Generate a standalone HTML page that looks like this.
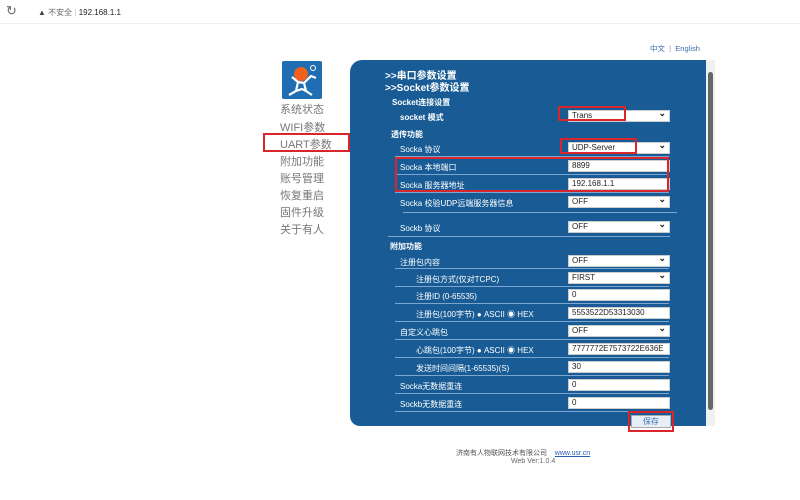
<!DOCTYPE html>
<html><head><meta charset="utf-8"><style>
*{margin:0;padding:0;box-sizing:border-box}
body{width:800px;height:500px;background:#fff;position:relative;overflow:hidden;font-family:"Liberation Sans","Noto Sans CJK SC",sans-serif}
.a{position:absolute;white-space:nowrap}
.w{color:#fff;font-size:8px}
.b{font-weight:bold}
.sel,.inp{position:absolute;left:568px;width:102px;height:12px;background:#fff;border:1px solid #ccc;font-size:8px;color:#222;padding-left:3px;line-height:10px}
.sel:after{content:"⌄";position:absolute;right:3px;top:-3px;font-size:9px;font-weight:bold}
.ln{position:absolute;left:395px;width:274px;height:1px;background:#7aa6cf}
.red{position:absolute;border:2px solid #d9262c}
.nav{position:absolute;left:280px;font-size:11px;color:#777}
</style></head><body>
<div class="a" style="left:0;top:0;width:800px;height:24px;background:#fff;border-bottom:1px solid #eee"></div>
<div class="a" style="left:6px;top:3px;font-size:13px;color:#666">↻</div>
<div class="a" style="left:38px;top:7px;font-size:8px;color:#444">▲ <span style="color:#666">不安全</span> <span style="color:#ccc">|</span> <span style="color:#222">192.168.1.1</span></div>
<div class="a" style="left:650px;top:43px;font-size:7.5px;color:#3a6fb0">中文 <span style="color:#999">&nbsp;|&nbsp;</span> English</div>
<svg class="a" style="left:282px;top:61px" width="40" height="38" viewBox="0 0 40 38"><rect width="40" height="38" rx="2" fill="#1f6db3"/><circle cx="19" cy="13" r="7" fill="#f0611e"/><circle cx="31" cy="7" r="2.5" fill="none" stroke="#fff" stroke-width="1"/><path d="M10 16 L16 21 L14 30 L7 34 M16 21 L22 22 L29 15 L34 17 M22 22 L24 30 L30 34 M14 30 L20 28 L24 30" fill="none" stroke="#fff" stroke-width="2.2" stroke-linejoin="round"/></svg>
<div class="nav" style="top:101px">系统状态</div>
<div class="nav" style="top:119px">WIFI参数</div>
<div class="nav" style="top:136px">UART参数</div>
<div class="nav" style="top:153px">附加功能</div>
<div class="nav" style="top:170px">账号管理</div>
<div class="nav" style="top:187px">恢复重启</div>
<div class="nav" style="top:204px">固件升级</div>
<div class="nav" style="top:221px">关于有人</div>
<div class="red" style="left:263px;top:133px;width:87px;height:19px"></div>
<div class="a" style="left:350px;top:60px;width:358px;height:366px;background:#195c95;border-radius:12px 0 0 10px"></div>
<div class="a" style="left:706px;top:60px;width:9px;height:366px;background:#f0f0f0"></div>
<div class="a" style="left:708px;top:72px;width:5px;height:338px;background:#666;border-radius:3px"></div>
<div class="a w b" style="left:385px;top:67px;font-size:10px">&gt;&gt;串口参数设置</div>
<div class="a w b" style="left:385px;top:79px;font-size:10px">&gt;&gt;Socket参数设置</div>
<div class="a w b" style="left:392px;top:97px">Socket连接设置</div>
<div class="a w b" style="left:400px;top:112px">socket 模式</div>
<div class="sel" style="top:110px">Trans</div>
<div class="a w b" style="left:391px;top:129px">透传功能</div>
<div class="a w" style="left:400px;top:144px">Socka 协议</div><div class="sel" style="top:142px">UDP-Server</div>
<div class="ln" style="top:156px"></div>
<div class="a w" style="left:400px;top:162px">Socka 本地端口</div><div class="inp" style="top:160px">8899</div>
<div class="ln" style="top:174px"></div>
<div class="a w" style="left:400px;top:180px">Socka 服务器地址</div><div class="inp" style="top:178px">192.168.1.1</div>
<div class="ln" style="top:192px"></div>
<div class="a w" style="left:400px;top:198px">Socka 校验UDP远端服务器信息</div><div class="sel" style="top:196px">OFF</div>
<div class="ln" style="top:212px;left:403px"></div>
<div class="a w" style="left:400px;top:223px">Sockb 协议</div><div class="sel" style="top:221px">OFF</div>
<div class="ln" style="top:236px;left:388px;width:282px"></div>
<div class="a w b" style="left:390px;top:241px">附加功能</div>
<div class="a w" style="left:400px;top:257px">注册包内容</div><div class="sel" style="top:255px">OFF</div>
<div class="ln" style="top:268px"></div>
<div class="a w" style="left:416px;top:274px">注册包方式(仅对TCPC)</div><div class="sel" style="top:272px">FIRST</div>
<div class="ln" style="top:286px"></div>
<div class="a w" style="left:416px;top:291px">注册ID (0-65535)</div><div class="inp" style="top:289px">0</div>
<div class="ln" style="top:303px"></div>
<div class="a w" style="left:416px;top:309px">注册包(100字节) ● ASCII ◉ HEX</div><div class="inp" style="top:307px">5553522D53313030</div>
<div class="ln" style="top:321px"></div>
<div class="a w" style="left:400px;top:327px">自定义心跳包</div><div class="sel" style="top:325px">OFF</div>
<div class="ln" style="top:339px"></div>
<div class="a w" style="left:416px;top:345px">心跳包(100字节) ● ASCII ◉ HEX</div><div class="inp" style="top:343px">7777772E7573722E636E</div>
<div class="ln" style="top:357px"></div>
<div class="a w" style="left:416px;top:363px">发送时间间隔(1-65535)(S)</div><div class="inp" style="top:361px">30</div>
<div class="ln" style="top:375px"></div>
<div class="a w" style="left:400px;top:381px">Socka无数据重连</div><div class="inp" style="top:379px">0</div>
<div class="ln" style="top:393px"></div>
<div class="a w" style="left:400px;top:399px">Sockb无数据重连</div><div class="inp" style="top:397px">0</div>
<div class="ln" style="top:411px"></div>
<div class="a" style="left:631px;top:415px;width:40px;height:13px;background:#e8eef5;border:1px solid #aaa;font-size:8px;color:#3a6fb0;text-align:center;line-height:11px">保存</div>
<div class="red" style="left:558px;top:106px;width:68px;height:15px"></div>
<div class="red" style="left:560px;top:138px;width:77px;height:16px"></div>
<div class="red" style="left:395px;top:157px;width:274px;height:35px"></div>
<div class="red" style="left:628px;top:411px;width:46px;height:21px"></div>
<div class="a" style="left:456px;top:448px;font-size:7px;color:#555">济南有人物联网技术有限公司 &nbsp; &nbsp;<span style="color:#2a5fb0;text-decoration:underline">www.usr.cn</span></div>
<div class="a" style="left:511px;top:458px;font-size:7px;color:#666">Web Ver:1.0.4</div>
</body></html>
